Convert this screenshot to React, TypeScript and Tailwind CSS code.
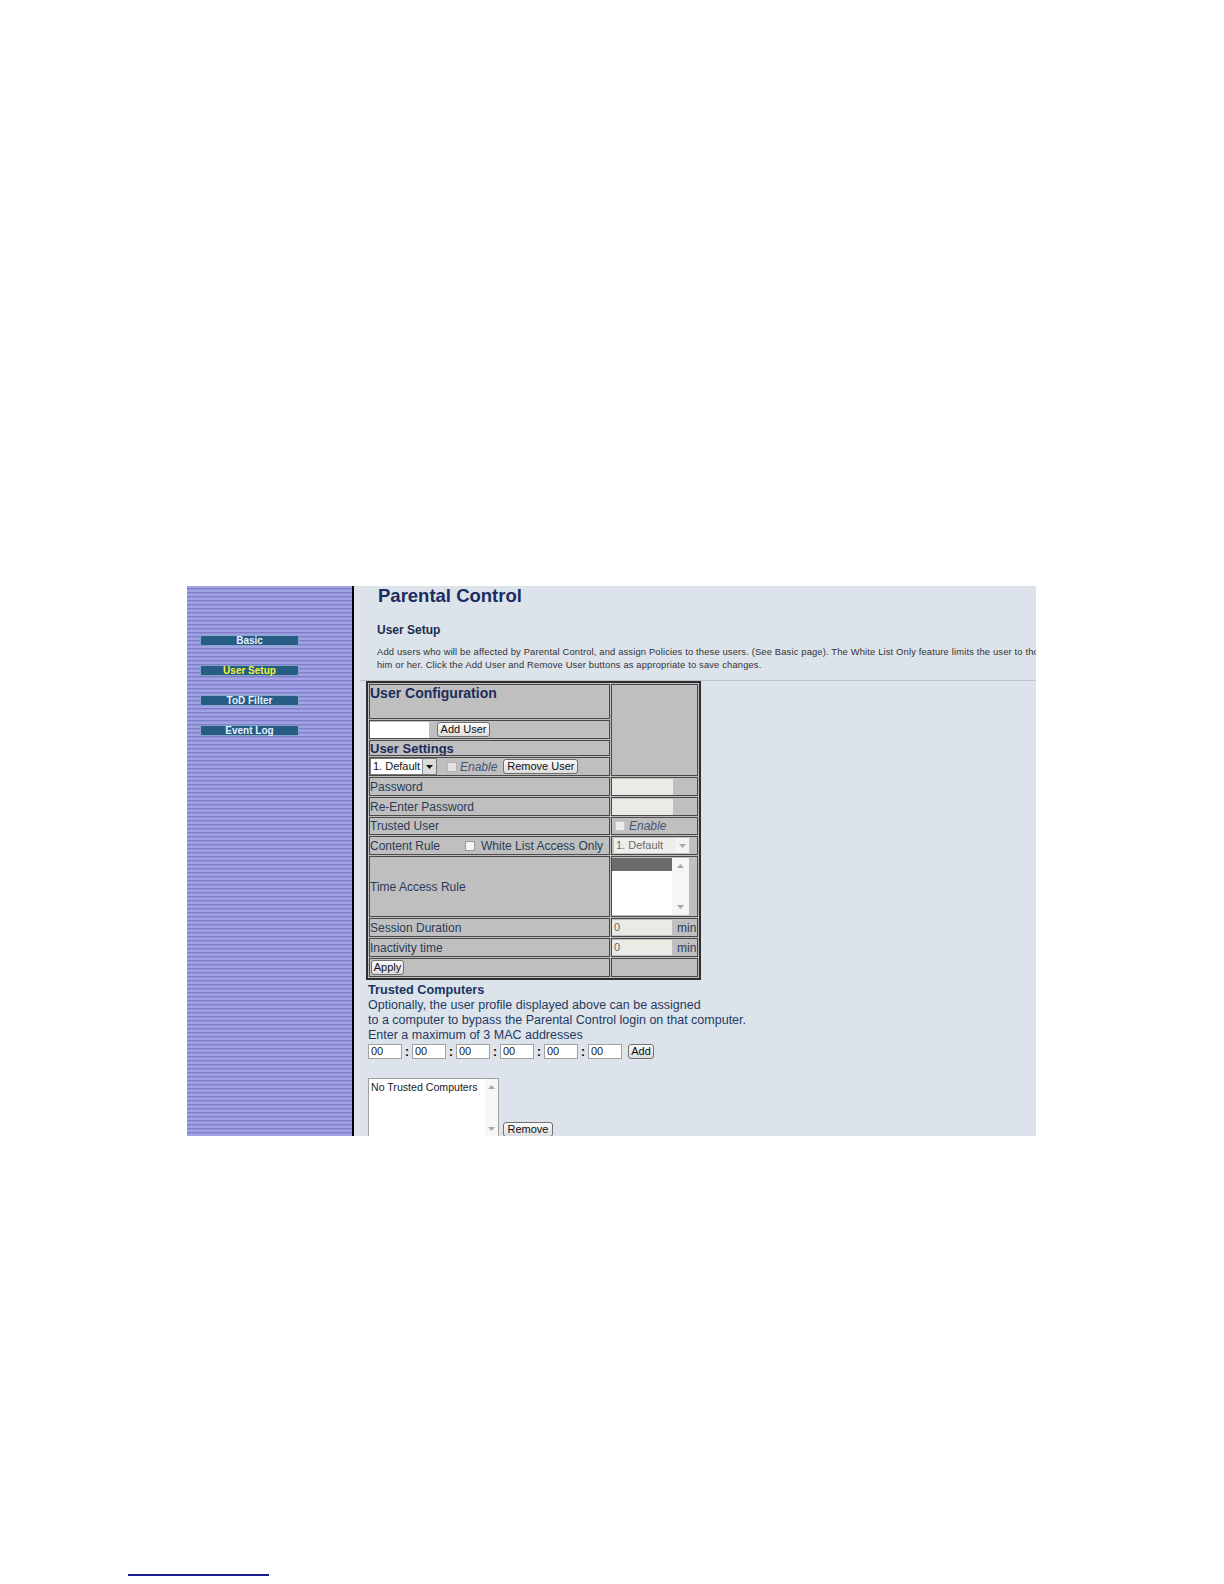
import React from 'react';

// Parental Control > User Setup (ルーター管理画面のスクリーンショット再現)

const NAV = [
  { label: 'Basic', active: false },
  { label: 'User Setup', active: true },
  { label: 'ToD Filter', active: false },
  { label: 'Event Log', active: false },
];

function Btn({ className = '', children }: { className?: string; children: React.ReactNode }) {
  return (
    <span
      className={`inline-flex h-[15px] shrink-0 items-center justify-center rounded-[3px] border border-[#707070] bg-linear-to-b from-[#fafafa] to-[#dcdcdc] text-[11px] leading-none text-[#111] ${className}`}
    >
      {children}
    </span>
  );
}

function Cell({ className = '', children }: { className?: string; children?: React.ReactNode }) {
  return (
    <div className={`flex items-center overflow-hidden border border-[#4a4a4a] bg-[#bfbfbf] text-[12px] leading-none text-[#2a3b58] ${className}`}>
      {children}
    </div>
  );
}

function Arrow({ up }: { up?: boolean }) {
  return (
    <svg width="7" height="4" viewBox="0 0 7 4">
      <path d={up ? 'M0 4 L3.5 0 L7 4 Z' : 'M0 0 L3.5 4 L7 0 Z'} fill="#a8a8a8" />
    </svg>
  );
}

function Sidebar() {
  return (
    <div className="flex w-[167px] shrink-0 flex-col gap-[19px] border-r-2 border-black bg-[image:repeating-linear-gradient(to_bottom,#a2a2e6_0px,#a2a2e6_2px,#7e7ec8_2px,#7e7ec8_3px,#9393da_3px,#9393da_4px)] pt-[49px]">
      {NAV.map(n => (
        <div
          key={n.label}
          className={`ml-[13px] flex h-[11px] w-[99px] items-center justify-center rounded-[2px] border border-[#86a6c8] bg-[#275c85] text-[10px] font-bold leading-none ${n.active ? 'text-[#f4f43c]' : 'text-[#e4f2ff]'}`}
        >
          {n.label}
        </div>
      ))}
    </div>
  );
}

function UserTable() {
  return (
    <div className="ml-[12px] grid w-[335px] grid-cols-[241px_87px] grid-rows-[35px_19px_16px_19px_19px_19px_18px_19px_61px_19px_19px_19px] gap-px border-2 border-[#2e2e2e] bg-[#bcbcbc] p-px">
      {/* ヘッダー */}
      <Cell className="items-start">
        <span className="text-[14px] font-bold leading-[16px] text-[#1b2d5c]">User Configuration</span>
      </Cell>
      <Cell className="row-span-4" />

      <Cell>
        <span className="h-[16px] w-[59px] bg-white" />
        <Btn className="ml-[8px] w-[53px]">Add User</Btn>
      </Cell>
      <Cell>
        <span className="text-[13px] font-bold text-[#1b2d5c]">User Settings</span>
      </Cell>
      <Cell>
        <span className="flex h-[17px] w-[67px] items-center border border-[#7a7a7a] bg-white">
          <span className="flex-1 pl-[2px] text-[11px] text-[#111]">1. Default</span>
          <span className="flex h-full w-[14px] items-center justify-center border-l border-[#8a8a8a] bg-[#dcdcdc]">
            <svg width="7" height="4" viewBox="0 0 7 4"><path d="M0 0 L3.5 4 L7 0 Z" fill="#111" /></svg>
          </span>
        </span>
        <span className="ml-[10px] h-[10px] w-[10px] border border-[#b5b5b5] bg-[#e2e2e2]" />
        <span className="ml-[3px] italic text-[#44557a]">Enable</span>
        <Btn className="ml-[6px] w-[75px]">Remove User</Btn>
      </Cell>

      <Cell>Password</Cell>
      <Cell>
        <span className="h-[16px] w-[61px] bg-[#ebebe6]" />
      </Cell>

      <Cell>Re-Enter Password</Cell>
      <Cell>
        <span className="h-[16px] w-[61px] bg-[#ebebe6]" />
      </Cell>

      <Cell>Trusted User</Cell>
      <Cell>
        <span className="ml-[3px] h-[10px] w-[10px] border border-[#c8c8c8] bg-[#ececec]" />
        <span className="ml-[4px] italic text-[#44557a]">Enable</span>
      </Cell>

      <Cell>
        <span>Content Rule</span>
        <span className="ml-[25px] h-[10px] w-[10px] border border-[#9a9a9a] bg-[#f4f4f4]" />
        <span className="ml-[6px]">White List Access Only</span>
      </Cell>
      <Cell>
        <span className="ml-[1px] flex h-[17px] w-[77px] items-center border border-[#c4c4c4] bg-[#eeeeea]">
          <span className="flex-1 pl-[2px] text-[11px] text-[#6c6c6c]">1. Default</span>
          <span className="flex h-full w-[13px] items-center justify-center bg-[#f4f4f4]">
            <Arrow />
          </span>
        </span>
      </Cell>

      <Cell>Time Access Rule</Cell>
      <Cell>
        <span className="flex h-[57px] w-[77px] bg-white">
          <span className="flex-1">
            <span className="block h-[13px] bg-[#6b6b6b]" />
          </span>
          <span className="flex w-[17px] flex-col items-center justify-between bg-[#f6f6f6] py-[6px]">
            <Arrow up />
            <Arrow />
          </span>
        </span>
      </Cell>

      <Cell>Session Duration</Cell>
      <Cell>
        <span className="flex h-[15px] w-[60px] items-center bg-[#ebebe6] pl-[2px] text-[11px] text-[#666]">0</span>
        <span className="ml-[5px]">min</span>
      </Cell>

      <Cell>Inactivity time</Cell>
      <Cell>
        <span className="flex h-[15px] w-[60px] items-center bg-[#ebebe6] pl-[2px] text-[11px] text-[#666]">0</span>
        <span className="ml-[5px]">min</span>
      </Cell>

      <Cell>
        <Btn className="ml-px w-[33px]">Apply</Btn>
      </Cell>
      <Cell />
    </div>
  );
}

function TrustedComputers() {
  const fields = ['00', '00', '00', '00', '00', '00'];
  return (
    <div className="ml-[14px] mt-[2px] text-[#1f3a62]">
      <div className="text-[12.7px] font-bold leading-[16px] text-[#1b3563]">Trusted Computers</div>
      <div className="text-[12.5px] leading-[15px]">
        Optionally, the user profile displayed above can be assigned
        <br />
        to a computer to bypass the Parental Control login on that computer.
        <br />
        Enter a maximum of 3 MAC addresses
      </div>
      <div className="mt-[1px] flex h-[15px] items-center">
        {fields.map((f, i) => (
          <React.Fragment key={i}>
            <span className="flex h-[15px] w-[34px] items-center border border-[#a0a0a0] bg-white pl-[2px] text-[11px] text-[#222]">{f}</span>
            {i < fields.length - 1 && (
              <span className="w-[10px] text-center text-[12px] font-bold text-black">:</span>
            )}
          </React.Fragment>
        ))}
        <Btn className="ml-[6px] w-[26px]">Add</Btn>
      </div>
      <div className="mt-[19px] flex items-end">
        <div className="flex h-[64px] w-[131px] border border-[#a0a0a0] bg-white">
          <span className="flex-1 pl-[2px] pt-[3px] text-[10.6px] leading-none text-[#222]">No Trusted Computers</span>
          <span className="flex w-[13px] flex-col items-center justify-between bg-[#f6f6f6] pb-[10px] pt-[6px]">
            <Arrow up />
            <Arrow />
          </span>
        </div>
        <Btn className="mb-[5px] ml-[4px] w-[50px]">Remove</Btn>
      </div>
    </div>
  );
}

function Main() {
  return (
    <div className="min-w-0 flex-1 overflow-hidden bg-[#dce3eb]">
      <h1 className="ml-[24px] text-[18.5px] font-bold leading-[19px] text-[#1b2d5e]">Parental Control</h1>
      <h2 className="ml-[23px] mt-[18px] text-[12px] font-bold leading-[14px] text-[#1b2d4e]">User Setup</h2>
      <p className="ml-[23px] mt-[8px] whitespace-nowrap text-[9.4px] leading-[13px] tracking-[0.15px] text-[#333]">
        Add users who will be affected by Parental Control, and assign Policies to these users. (See Basic page). The White List Only feature limits the user to those
        <br />
        him or her. Click the Add User and Remove User buttons as appropriate to save changes.
      </p>
      <div className="ml-[6px] mt-[9px] h-px bg-[#bcc3cc]" />
      <UserTable />
      <TrustedComputers />
    </div>
  );
}

export default function App() {
  return (
    <div className="h-[1584px] w-[1224px] bg-white pt-[586px] font-['Liberation_Sans',Arial,sans-serif]">
      <div className="ml-[187px] flex h-[550px] w-[849px] overflow-hidden">
        <Sidebar />
        <Main />
      </div>
      <div className="ml-[128px] mt-[438px] h-[1.5px] w-[141px] bg-[#1c1c8c]" />
    </div>
  );
}
